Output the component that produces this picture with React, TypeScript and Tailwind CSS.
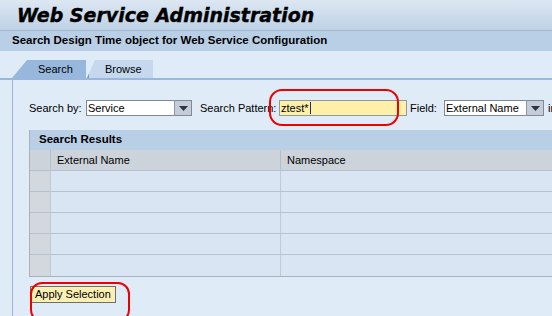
import React from 'react';

const rows = [0, 1, 2, 3, 4];

function DropButton() {
  return (
    <div className="w-[17px] h-full shrink-0 flex items-center justify-center bg-[#c3ccd8] border-l border-[#8e99a5]">
      <svg width="9" height="5" viewBox="0 0 9 5">
        <polygon points="0,0 9,0 4.5,5" fill="#2b3440" />
      </svg>
    </div>
  );
}

export default function App() {
  return (
    <div className="relative w-[552px] h-[316px] overflow-hidden bg-[#dfebf6] text-[11px] text-black font-['Liberation_Sans',Arial,sans-serif]">
      {/* page header */}
      <div className="h-[31px] flex items-center pl-[17px] bg-gradient-to-b from-[#dce7f2] to-[#bfd2e6] border-b border-[#a3b9d0]">
        <h1 className="text-[19px] font-bold italic font-['DejaVu_Sans',Verdana,sans-serif] leading-none [-webkit-text-stroke:0.4px_black]">
          Web Service Administration
        </h1>
      </div>
      <div className="h-[20px] flex items-center pl-[12px] bg-[#b9cfe6] text-[11.5px] font-bold">
        Search Design Time object for Web Service Configuration
      </div>

      {/* tabs */}
      <div className="pl-[12px] mt-[9px] flex h-[18px]">
        <div className="w-[74px] h-full shrink-0 bg-[#97b7dc] [clip-path:polygon(15px_0,100%_0,100%_100%,0_100%)] flex items-center pl-[26px]">
          Search
        </div>
        <div className="relative w-[66px] h-full shrink-0 ml-[1px] bg-[#c5d8ed] [clip-path:polygon(8px_0,100%_0,100%_100%,0_100%)] flex items-center pl-[18px]">
          <div className="absolute left-0 bottom-0 w-[2px] h-[9px] bg-[#7f97b3]" />
          Browse
        </div>
      </div>
      <div className="h-[2px] bg-[#97b7dc]" />

      {/* tab content */}
      <div className="ml-[12px] border-l border-[#9ab5d6] h-[240px] pl-[16px] pt-[20px]">
        <div className="flex items-center h-[16px] whitespace-nowrap">
          <span className="w-[57px] shrink-0">Search by:</span>
          <div className="w-[106px] h-[16px] shrink-0 flex bg-white border border-[#7f8a96]">
            <span className="flex-1 pl-[1px] leading-[14px]">Service</span>
            <DropButton />
          </div>
          <span className="ml-[8px] w-[79px] shrink-0">Search Pattern:</span>
          <div className="w-[128px] h-[16px] shrink-0 flex items-center bg-[#fff0a8] border border-[#8f9aa5] pl-[1px]">
            <span className="leading-[14px]">ztest*</span>
            <span className="ml-[1px] w-[1px] h-[12px] bg-[#1c2f6b]" />
          </div>
          <span className="ml-[3px] w-[34px] shrink-0">Field:</span>
          <div className="w-[100px] h-[16px] shrink-0 flex bg-white border border-[#7f8a96]">
            <span className="flex-1 pl-[1px] leading-[14px] overflow-hidden">External Name</span>
            <DropButton />
          </div>
          <span className="ml-[4px] shrink-0">in</span>
        </div>

        {/* results table */}
        <div className="mt-[14px] w-[560px] border-l border-b border-[#a8b2be]">
          <div className="h-[20px] flex items-center pl-[9px] bg-[#b9cfe6] font-bold text-[11.5px]">Search Results</div>
          <div className="flex h-[21px] bg-[#cdd3da] border-b border-[#b5bfcb]">
            <div className="w-[21px] shrink-0 border-r border-[#b5bfcb]" />
            <div className="w-[230px] shrink-0 border-r border-[#b5bfcb] flex items-center pl-[6px]">External Name</div>
            <div className="flex-1 flex items-center pl-[6px]">Namespace</div>
          </div>
          {rows.map(r => (
            <div key={r} className={`flex h-[21px] ${r < 4 ? 'border-b border-[#b7c2cf]' : ''}`}>
              <div className="w-[21px] shrink-0 bg-[#d3d7de] border-r border-[#c2c8d0]" />
              <div className="w-[230px] shrink-0 bg-[#d9e5f3] border-r border-[#c2cad6]" />
              <div className="flex-1 bg-[#d9e5f3]" />
            </div>
          ))}
        </div>

        <button className="mt-[9px] ml-[1px] h-[17px] w-[86px] pl-[4px] text-left bg-[#fbf0b4] border border-[#6f6f6f] leading-[15px]">
          Apply Selection
        </button>
      </div>

      {/* red annotations */}
      <div className="absolute left-[269px] top-[89px] w-[130px] h-[37px] border-2 border-[#ee0000] rounded-[13px]" />
      <div className="absolute left-[30px] top-[282px] w-[100px] h-[40px] border-2 border-[#ee0000] rounded-[12px]" />
    </div>
  );
}
